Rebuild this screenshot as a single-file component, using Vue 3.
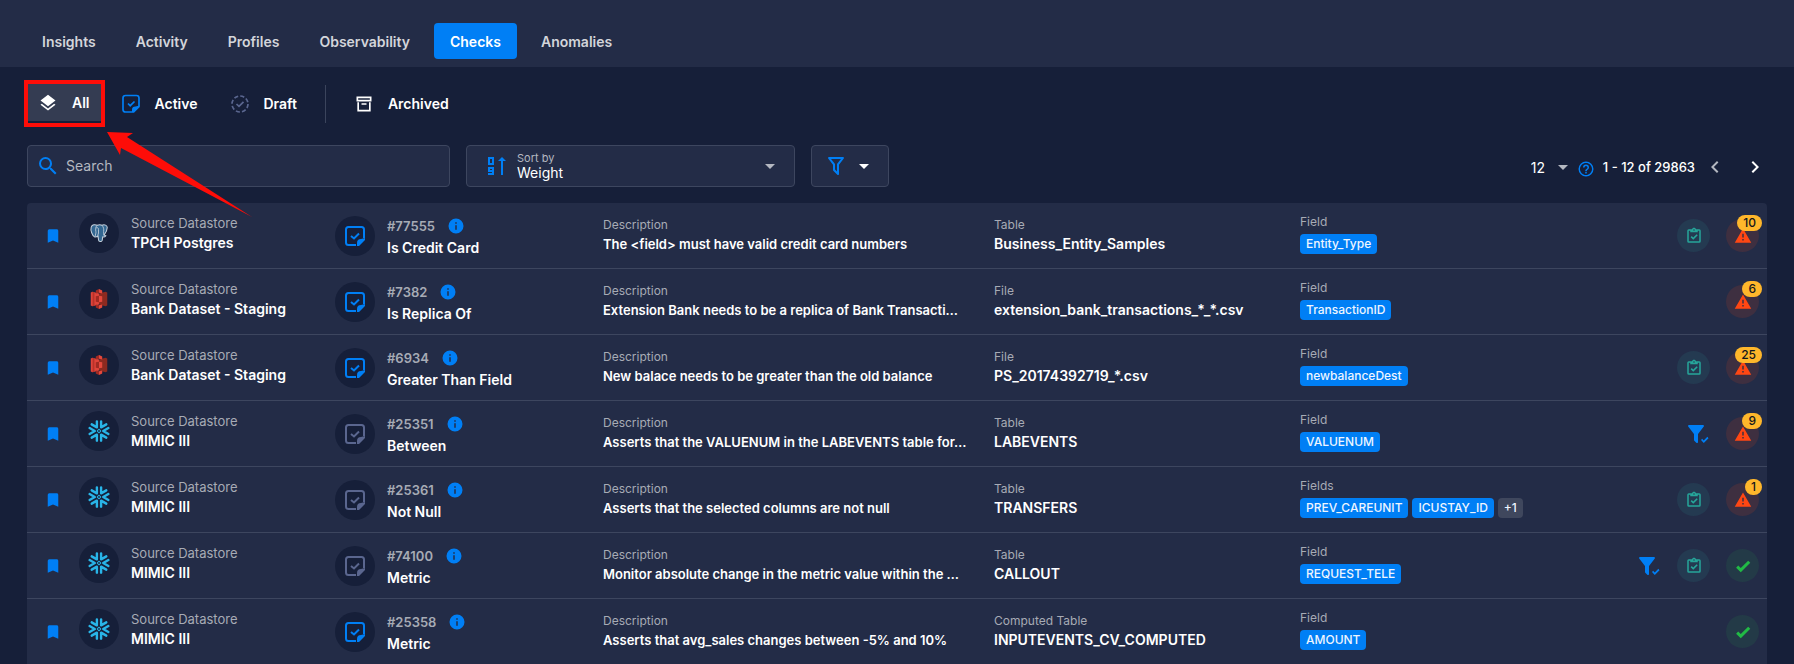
<script setup>
import { ref } from 'vue'

const tabs = ['Insights', 'Activity', 'Profiles', 'Observability', 'Checks', 'Anomalies']
const currentTab = ref('Checks')
const search = ref('')
const sortBy = ref('Weight')
const pageSize = ref('12')

const icons = {
  layers: 'M12,16L19.36,10.27L21,9L12,2L3,9L4.63,10.27M12,18.54L4.62,12.81L3,14.07L12,21.07L21,14.07L19.37,12.8L12,18.54Z',
  archive: 'M20 21H4V10H6V19H18V10H20V21M3 3H21V9H3V3M9.5 11H14.5C14.78 11 15 11.22 15 11.5V13H9V11.5C9 11.22 9.22 11 9.5 11M5 5V7H19V5H5Z',
  magnify: 'M9.5,3A6.5,6.5 0 0,1 16,9.5C16,11.11 15.41,12.59 14.44,13.73L14.71,14H15.5L20.5,19L19,20.5L14,15.5V14.71L13.73,14.44C12.59,15.41 11.11,16 9.5,16A6.5,6.5 0 0,1 3,9.5A6.5,6.5 0 0,1 9.5,3M9.5,5C7,5 5,7 5,9.5C5,12 7,14 9.5,14C12,14 14,12 14,9.5C14,7 12,5 9.5,5Z',
  filter: 'M15,19.88C15.04,20.18 14.94,20.5 14.71,20.71C14.32,21.1 13.69,21.1 13.3,20.71L9.29,16.7C9.06,16.47 8.96,16.16 9,15.87V10.75L4.21,4.62C3.87,4.19 3.95,3.56 4.38,3.22C4.57,3.08 4.78,3 5,3V3H19V3C19.22,3 19.43,3.08 19.62,3.22C20.05,3.56 20.13,4.19 19.79,4.62L15,10.75V19.88M7.04,5L11,10.06V15.58L13,17.58V10.05L16.96,5H7.04Z',
  menuDown: 'M7,10L12,15L17,10H7Z',
  left: 'M15.41,16.58L10.83,12L15.41,7.41L14,6L8,12L14,18L15.41,16.58Z',
  right: 'M8.59,16.58L13.17,12L8.59,7.41L10,6L16,12L10,18L8.59,16.58Z',
  help: 'M11,18H13V16H11V18M12,2A10,10 0 0,0 2,12A10,10 0 0,0 12,22A10,10 0 0,0 22,12A10,10 0 0,0 12,2M12,20C7.59,20 4,16.41 4,12C4,7.59 7.59,4 12,4C16.41,4 20,7.59 20,12C20,16.41 16.41,20 12,20M12,6A4,4 0 0,0 8,10H10A2,2 0 0,1 12,8A2,2 0 0,1 14,10C14,12 11,11.75 11,15H13C13,12.75 16,12.5 16,10A4,4 0 0,0 12,6Z',
  info: 'M13,9H11V7H13M13,17H11V11H13M12,2A10,10 0 0,0 2,12A10,10 0 0,0 12,22A10,10 0 0,0 22,12A10,10 0 0,0 12,2Z',
  bookmark: 'M17,3H7A2,2 0 0,0 5,5V21L12,18L19,21V5C19,3.89 18.1,3 17,3Z',
  clipboard: 'M19,3H14.82C14.4,1.84 13.3,1 12,1C10.7,1 9.6,1.84 9.18,3H5A2,2 0 0,0 3,5V19A2,2 0 0,0 5,21H19A2,2 0 0,0 21,19V5A2,2 0 0,0 19,3M12,3A1,1 0 0,1 13,4A1,1 0 0,1 12,5A1,1 0 0,1 11,4A1,1 0 0,1 12,3M7,7H17V5H19V19H5V5H7V7M7.5,13.5L9,12L11,14L15.5,9.5L17,11L11,17L7.5,13.5Z',
  alert: 'M13 14H11V9H13M13 18H11V16H13M1 21H23L12 2L1 21Z',
  check: 'M9,20.42L2.79,14.21L5.62,11.38L9,14.77L18.88,4.88L21.71,7.71L9,20.42Z',
  filterCheck: 'M12 12V19.88C12.04 20.18 11.94 20.5 11.71 20.71C11.32 21.1 10.69 21.1 10.3 20.71L8.29 18.7C8.06 18.47 7.96 18.16 8 17.87V12H7.97L2.21 4.62C1.87 4.19 1.95 3.56 2.38 3.22C2.57 3.08 2.78 3 3 3H17C17.22 3 17.43 3.08 17.62 3.22C18.05 3.56 18.13 4.19 17.79 4.62L12.03 12H12M17.75 21L15 18L16.16 16.84L17.75 18.43L21.34 14.84L22.5 16.25L17.75 21',
}

const checks = [
  { kind: 'postgres', store: 'TPCH Postgres', id: '#77555', rule: 'Is Credit Card', authored: true, description: 'The <field> must have valid credit card numbers', source: 'Table', name: 'Business_Entity_Samples', fieldLabel: 'Field', fields: ['Entity_Type'], asserted: true, anomalies: 10 },
  { kind: 's3', store: 'Bank Dataset - Staging', id: '#7382', rule: 'Is Replica Of', authored: true, description: 'Extension Bank needs to be a replica of Bank Transacti…', source: 'File', name: 'extension_bank_transactions_*_*.csv', fieldLabel: 'Field', fields: ['TransactionID'], anomalies: 6 },
  { kind: 's3', store: 'Bank Dataset - Staging', id: '#6934', rule: 'Greater Than Field', authored: true, description: 'New balace needs to be greater than the old balance', source: 'File', name: 'PS_20174392719_*.csv', fieldLabel: 'Field', fields: ['newbalanceDest'], asserted: true, anomalies: 25 },
  { kind: 'snowflake', store: 'MIMIC III', id: '#25351', rule: 'Between', description: 'Asserts that the VALUENUM in the LABEVENTS table for…', source: 'Table', name: 'LABEVENTS', fieldLabel: 'Field', fields: ['VALUENUM'], filtered: true, anomalies: 9 },
  { kind: 'snowflake', store: 'MIMIC III', id: '#25361', rule: 'Not Null', description: 'Asserts that the selected columns are not null', source: 'Table', name: 'TRANSFERS', fieldLabel: 'Fields', fields: ['PREV_CAREUNIT', 'ICUSTAY_ID'], more: '+1', asserted: true, anomalies: 1 },
  { kind: 'snowflake', store: 'MIMIC III', id: '#74100', rule: 'Metric', description: 'Monitor absolute change in the metric value within the …', source: 'Table', name: 'CALLOUT', fieldLabel: 'Field', fields: ['REQUEST_TELE'], filtered: true, asserted: true, anomalies: 0 },
  { kind: 'snowflake', store: 'MIMIC III', id: '#25358', rule: 'Metric', authored: true, description: 'Asserts that avg_sales changes between -5% and 10%', source: 'Computed Table', name: 'INPUTEVENTS_CV_COMPUTED', fieldLabel: 'Field', fields: ['AMOUNT'], anomalies: 0 },
]
const spokes = [0, 60, 120, 180, 240, 300]
</script>

<template>
  <div class="page">
    <header class="header">
      <nav class="tabs">
        <a v-for="t in tabs" :key="t" href="#" class="tab" :class="{ current: t === currentTab }" @click.prevent="currentTab = t">{{ t }}</a>
      </nav>
    </header>

    <main class="main">
      <div class="states">
        <div class="marked">
          <button type="button" class="state selected">
            <svg class="i20" viewBox="0 0 24 24"><path :d="icons.layers" /></svg>
            <span>All</span>
          </button>
          <svg class="arrow" viewBox="0 0 146 86"><path d="M0 0L26 1L20 5L145 85L14 16L13 23Z" /></svg>
        </div>
        <button type="button" class="state">
          <svg class="i20 note on" viewBox="0 0 20 20"><path d="M11 18H4.500Q2 18 2 15.500V4Q2 1.500 4.500 1.500H15.500Q18 1.500 18 4V12M7 9.500L9.200 11.700L13.500 7.500" /><path class="fold" d="M18.800 11.500V13L13 18.800H11V15.500Q11 12.500 14.500 12.500Z" /></svg>
          <span>Active</span>
        </button>
        <button type="button" class="state">
          <svg class="i20 note" viewBox="0 0 20 20"><circle cx="10" cy="10" r="8" stroke-dasharray="4.200 2.080" /><path d="M6.500 10L9 12.400L13.500 7.800" /></svg>
          <span>Draft</span>
        </button>
        <span class="rule"></span>
        <button type="button" class="state">
          <svg class="i20" viewBox="0 0 24 24"><path :d="icons.archive" /></svg>
          <span>Archived</span>
        </button>
      </div>

      <div class="toolbar">
        <label class="box search">
          <svg class="i24 blue" viewBox="0 0 24 24"><path :d="icons.magnify" /></svg>
          <input v-model="search" type="text" placeholder="Search" aria-label="Search" />
        </label>
        <div class="box sort">
          <svg class="i24 sorticon" viewBox="0 0 24 24"><path d="M4 4H8V10H4ZM8 17H4V14H8V20H3" /><path d="M17 21V5" /><path class="tip" d="M13 7L17 3L21 7Z" /></svg>
          <div class="sortfield">
            <label for="sort">Sort by</label>
            <select id="sort" v-model="sortBy">
              <option>Weight</option>
              <option>Anomalies</option>
            </select>
          </div>
          <svg class="i24 dim" viewBox="0 0 24 24"><path :d="icons.menuDown" /></svg>
        </div>
        <button type="button" class="box filter" aria-label="Filter">
          <svg class="i24 blue" viewBox="0 0 24 24"><path :d="icons.filter" /></svg>
          <svg class="i24" viewBox="0 0 24 24"><path :d="icons.menuDown" /></svg>
        </button>
        <div class="pager">
          <select v-model="pageSize" aria-label="Rows per page">
            <option>12</option>
            <option>24</option>
          </select>
          <svg class="i24 dim" viewBox="0 0 24 24"><path :d="icons.menuDown" /></svg>
          <svg class="i18 blue help" viewBox="0 0 24 24"><path :d="icons.help" /></svg>
          <span class="range">1 - 12 of 29863</span>
          <button type="button" class="step dim" aria-label="Previous page"><svg class="i24" viewBox="0 0 24 24"><path :d="icons.left" /></svg></button>
          <button type="button" class="step" aria-label="Next page"><svg class="i24" viewBox="0 0 24 24"><path :d="icons.right" /></svg></button>
        </div>
      </div>

      <ul class="list">
        <li v-for="c in checks" :key="c.id" class="row">
          <button type="button" class="mark" aria-label="Bookmark"><svg class="i18 blue" viewBox="0 0 24 24"><path :d="icons.bookmark" /></svg></button>

          <div class="store">
            <span class="disc">
              <svg v-if="c.kind === 'postgres'" class="logo" viewBox="0 0 24 24">
                <path d="M3.500 5.500C4.500 2.500 8 2.700 10 3.500C12 2.700 14 2.800 15.300 3.600C18 2.300 21 3.700 21 6C21 9.500 19 12.500 17.500 14.300L19.500 15C18.500 16.500 17 16.600 16 16.300L15.500 20C14.800 21.800 11.800 22 11.500 19.500L11 15.500C9.500 16.500 8.700 15.800 7.500 16.500C4.500 15.500 2.500 8.500 3.500 5.500Z" fill="#336791" stroke="#c9d3de" stroke-width="1.100" />
                <path d="M10 3.700C8 5.500 8.200 8 8.600 10.500C8.900 12.500 8 13 7.800 16M15.300 3.700C17 5.500 17.500 8 17 10.500L17.300 14.200M9 6.500C10 5.800 11.500 6.200 11.400 8L11.500 12L10.500 15.200" fill="none" stroke="#c9d3de" stroke-width="0.900" />
              </svg>
              <svg v-else-if="c.kind === 's3'" class="logo" viewBox="0 0 24 24">
                <path d="M3 5L5 4L12 6V18L5 20L3 19Z" fill="#e0443a" />
                <path d="M21 5L19 4L12 6V18L19 20L21 19Z" fill="#8c2a20" />
                <path d="M5 4L7 4.600V19.400L5 20Z" fill="#b8322a" />
                <path d="M12 1L8.500 2.800V6L12 5.200ZM12 8.500L8.500 9V15L12 15.500ZM12 23L8.500 21.200V18L12 18.800Z" fill="#a12a22" />
                <path d="M12 1L15.500 2.800V6L12 5.200ZM12 8.500L15.500 9V15L12 15.500ZM12 23L15.500 21.200V18L12 18.800Z" fill="#e5483c" />
              </svg>
              <svg v-else class="i24 flake" viewBox="0 0 24 24">
                <path v-for="a in spokes" :key="a" d="M21.400 9L16.200 12L21.400 15" :transform="`rotate(${a} 12 12)`" />
                <rect x="10.700" y="10.700" width="2.600" height="2.600" transform="rotate(45 12 12)" />
              </svg>
            </span>
            <div>
              <div class="label">Source Datastore</div>
              <div class="value large">{{ c.store }}</div>
            </div>
          </div>

          <div class="check">
            <span class="disc">
              <svg class="i24 note" :class="{ on: c.authored }" viewBox="0 0 24 24"><path d="M13 21H5.500Q3 21 3 18.500V5.500Q3 3 5.500 3H18.500Q21 3 21 5.500V14M8 12L11 14.500L16 9.500" /><path class="fold" d="M22 14V16L16 22H14V19Q14 15 18 15Z" /></svg>
            </span>
            <div>
              <div class="id">{{ c.id }}<svg class="i18 blue" viewBox="0 0 24 24"><path :d="icons.info" /></svg></div>
              <div class="value large rulename">{{ c.rule }}</div>
            </div>
          </div>

          <div class="info">
            <div class="label small">Description</div>
            <div class="value">{{ c.description }}</div>
          </div>
          <div class="info">
            <div class="label small">{{ c.source }}</div>
            <div class="value large">{{ c.name }}</div>
          </div>
          <div class="fields">
            <div class="label small">{{ c.fieldLabel }}</div>
            <div class="chips">
              <span v-for="f in c.fields" :key="f" class="chip">{{ f }}</span>
              <span v-if="c.more" class="chip more">{{ c.more }}</span>
            </div>
          </div>

          <div class="status">
            <span v-if="c.filtered" class="slot"><svg class="i24 blue" viewBox="0 0 24 24"><path :d="icons.filterCheck" /></svg></span>
            <span v-if="c.asserted" class="dot teal"><svg class="i18" viewBox="0 0 24 24"><path :d="icons.clipboard" /></svg></span>
            <span v-if="c.anomalies" class="dot red"><svg class="i18" viewBox="0 0 24 24"><path :d="icons.alert" /></svg><span class="badge">{{ c.anomalies }}</span></span>
            <span v-else class="dot green"><svg class="i18" viewBox="0 0 24 24"><path :d="icons.check" /></svg></span>
          </div>
        </li>
      </ul>
    </main>
  </div>
</template>

<style>
body {
  margin: 0;
  background: #161f39;
}
</style>

<style scoped>
.page {
  min-height: 100vh;
  background: #161f39;
  color: #fff;
  font-family: Inter, "Liberation Sans", sans-serif;
  font-size: 13px;
}
.page *,
.page {
  box-sizing: border-box;
}
button,
input,
select {
  font: inherit;
  color: inherit;
  background: none;
  border: 0;
  padding: 0;
  margin: 0;
  outline: none;
}
button,
select {
  cursor: pointer;
}
select {
  appearance: none;
}
select option {
  color: #000;
}
svg {
  display: block;
  flex: none;
  fill: currentColor;
}
.i18 { width: 18px; height: 18px; }
.i20 { width: 20px; height: 20px; }
.i24 { width: 24px; height: 24px; }
.blue { color: #007ff5; }
.dim { color: #b4b8c1; }

.header {
  background: #232c47;
  padding: 23px 26px 8px;
}
.tabs {
  display: flex;
  gap: 8px;
}
.tab {
  height: 36px;
  line-height: 38px;
  padding: 0 16px;
  border-radius: 4px;
  color: #d3d5da;
  font-size: 14px;
  font-weight: 600;
  text-decoration: none;
}
.tab.current {
  background: #007ff5;
  color: #fff;
}

.main {
  padding: 13px 27px 0;
}
.states {
  display: flex;
  align-items: center;
  gap: 8px;
  height: 47px;
}
.marked {
  position: relative;
  border: 4px solid #fe0d08;
  margin-left: -3px;
  margin-right: -4px;
  padding-bottom: 2px;
  background: #161f39;
}
.state {
  display: flex;
  align-items: center;
  gap: 14px;
  height: 37px;
  padding: 0 12px;
  font-size: 14px;
  font-weight: 600;
}
.state.selected {
  background: #343c52;
  padding: 0 11px 0 10px;
}
.arrow {
  position: absolute;
  left: 79px;
  top: 48px;
  width: 146px;
  height: 86px;
  fill: #fe0d08;
  pointer-events: none;
  z-index: 2;
}
.rule {
  width: 1px;
  height: 38px;
  margin: 0 8px;
  background: #3b445c;
}
.note {
  fill: none;
  stroke: #5a668f;
  stroke-width: 2;
  color: #5a668f;
}
.note.on {
  stroke: #007ff5;
  color: #007ff5;
}
.i20.note {
  stroke-width: 1.7;
}
.note .fold {
  fill: currentColor;
  stroke: none;
}

.toolbar {
  display: flex;
  align-items: center;
  gap: 16px;
  margin-top: 18px;
  height: 42px;
}
.box {
  display: flex;
  align-items: center;
  height: 42px;
  background: #232c47;
  border: 1px solid #3d465f;
  border-radius: 4px;
}
.search {
  flex: 0 1 423px;
  gap: 6px;
  padding: 0 8px;
}
.search input {
  flex: 1;
  min-width: 0;
  padding-bottom: 2px;
  font-size: 14px;
}
.search input::placeholder {
  color: #b4b8c1;
  opacity: 1;
}
.sort {
  flex: 0 1 329px;
  gap: 8px;
  padding: 0 12px 0 18px;
}
.sorticon {
  fill: none;
  stroke: #007ff5;
  stroke-width: 2;
}
.sorticon .tip {
  fill: #007ff5;
  stroke: none;
}
.sortfield {
  flex: 1;
  display: flex;
  flex-direction: column;
}
.sortfield label {
  color: #b4b8c1;
  font-size: 11px;
  line-height: 14px;
}
.sortfield select {
  font-size: 14px;
  line-height: 16px;
  height: 16px;
}
.filter {
  gap: 4px;
  padding: 0 12px;
}
.pager {
  display: flex;
  align-items: center;
  margin-left: auto;
  padding-top: 2px;
  font-size: 14px;
}
.pager select {
  width: 20px;
}
.help {
  margin: 4px 8px 0 2px;
}
.range {
  white-space: nowrap;
  font-size: 13px;
  font-weight: 500;
}
.step {
  margin-left: 8px;
}
.step + .step {
  margin-left: 16px;
}

.list {
  list-style: none;
  margin: 16px 0 0;
  padding: 0;
  background: #232c47;
  border-radius: 4px 4px 0 0;
}
.row {
  display: grid;
  grid-template-columns: 52px minmax(0, 256fr) minmax(0, 268fr) minmax(0, 391fr) minmax(0, 306fr) minmax(0, 298fr) minmax(0, 161fr);
  padding-right: 8px;
  height: 66px;
  border-bottom: 1px solid #3d465f;
}
.row:last-child {
  height: 65px;
  border-bottom: 0;
}
.mark {
  align-self: center;
  padding-left: 17px;
}
.store,
.check {
  display: flex;
  gap: 12px;
  white-space: nowrap;
}
.store { padding-top: 10px; }
.check { padding-top: 13px; }
.disc {
  flex: none;
  display: grid;
  place-items: center;
  width: 40px;
  height: 40px;
  border-radius: 50%;
  background: #161f39;
}
.logo {
  width: 22px;
  height: 22px;
}
.flake {
  fill: none;
  stroke: #29b5e8;
  stroke-width: 2.4;
  stroke-linecap: round;
  stroke-linejoin: round;
}
.flake rect {
  stroke-width: 1;
}
.label {
  color: #a7abb5;
  line-height: 20px;
}
.label.small {
  font-size: 12px;
}
.value {
  font-weight: 600;
  line-height: 18px;
  white-space: nowrap;
}
.value.large {
  font-size: 14px;
}
.store .value {
  line-height: 20px;
}
.id {
  display: flex;
  align-items: center;
  gap: 12px;
  height: 20px;
  color: #a7abb5;
  font-weight: 600;
}
.value.rulename {
  line-height: 24px;
}
.info {
  padding-top: 12px;
}
.fields {
  padding-top: 9px;
}
.chips {
  display: flex;
  gap: 4px;
  margin-top: 2px;
}
.chip {
  height: 20px;
  line-height: 20px;
  padding: 0 6px;
  border-radius: 4px;
  background: #007ff5;
  color: #eef5ff;
  font-size: 12px;
  font-weight: 500;
}
.chip.more {
  background: #3f475d;
}
.status {
  display: flex;
  justify-content: flex-end;
  gap: 16px;
  padding-top: 16px;
}
.slot,
.dot {
  position: relative;
  display: flex;
  align-items: center;
  justify-content: center;
  width: 33px;
  height: 33px;
}
.slot {
  justify-content: flex-end;
}
.dot {
  border-radius: 50%;
}
.teal { background: #243a51; color: #26a69a; }
.red { background: #3e2f40; color: #ff4713; }
.green { background: #233a47; color: #21ba45; }
.badge {
  position: absolute;
  right: -3px;
  top: -4px;
  height: 16px;
  line-height: 16px;
  padding: 0 6px;
  border-radius: 8px;
  background: #ffb72b;
  color: #14161c;
  font-size: 12px;
  font-weight: 500;
}
</style>
